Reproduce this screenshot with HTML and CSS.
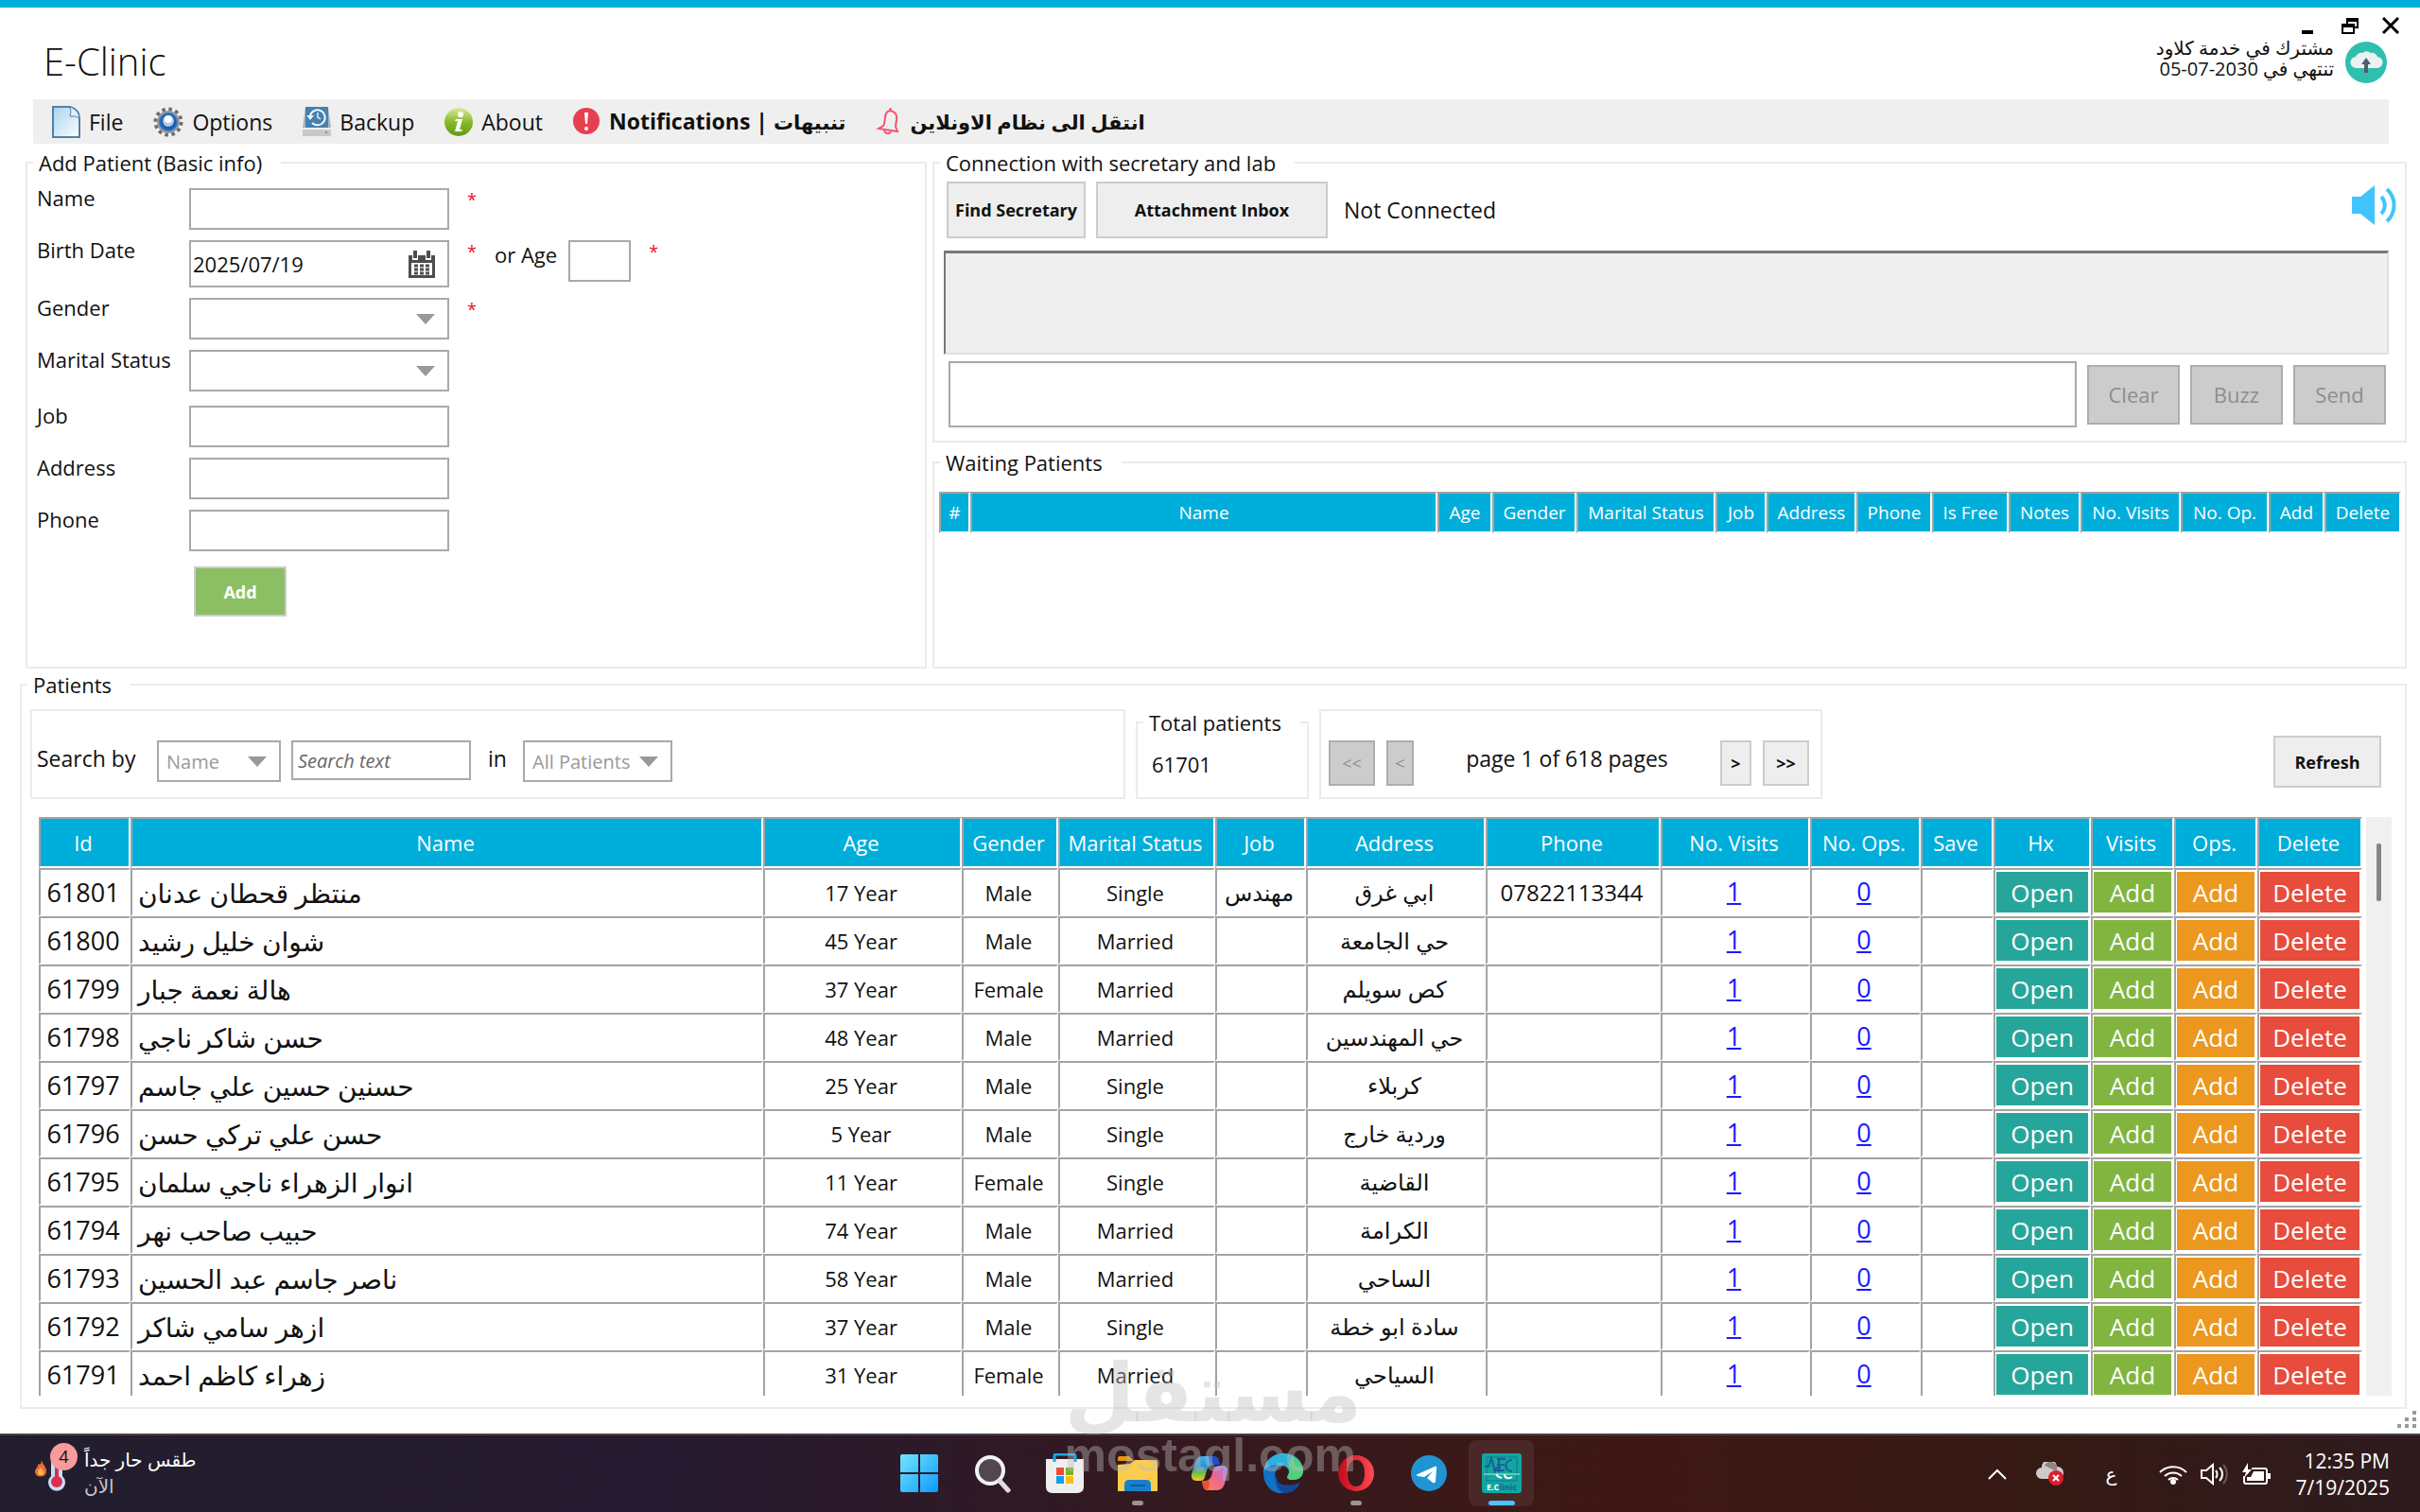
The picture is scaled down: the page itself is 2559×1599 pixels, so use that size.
FILE: index.html
```html
<!DOCTYPE html>
<html lang="en">
<head>
  <meta charset="UTF-8">
  <title>E-Clinic</title>
  <meta name="viewport" content="width=device-width, initial-scale=1">
  <link rel="stylesheet" href="styles.css">
</head>
<body>
  <div class="window">
    <header class="titlebar">
      <h1>E-Clinic</h1>
      <div class="titlebar-right">
        <div class="controls">
          <button type="button" aria-label="Minimize"><svg width="18" height="18" viewBox="0 0 18 18"><path d="M1 14h12v4H1z"/></svg></button>
          <button type="button" aria-label="Restore"><svg width="18" height="18" viewBox="0 0 18 18"><path d="M5 1h13v11h-4v6H0V7h5zm2 4v2h7v3h2V5zM2 11v5h10v-5z" fill-rule="evenodd"/></svg></button>
          <button type="button" aria-label="Close"><svg width="18" height="18" viewBox="0 0 18 18"><path d="M1 1l16 16M17 1L1 17" stroke="#000" stroke-width="3"/></svg></button>
        </div>
        <div class="cloud">
          <p lang="ar" dir="rtl">مشترك في خدمة كلاود<br>تنتهي في <bdi dir="ltr">05-07-2030</bdi></p>
          <svg width="44" height="44" viewBox="0 0 44 44"><circle cx="22" cy="22" r="22" fill="#2fbfae"/><path d="M12 28a6 6 0 0 1-1-12 6 6 0 0 1 7-4 7 7 0 0 1 9 0 6 6 0 0 1 7 4 6 6 0 0 1-1 12z" fill="#ecf0f1"/><path d="M22 17l5 7h-3v9h-4v-9h-3z" fill="#4f5d73"/></svg>
        </div>
      </div>
    </header>

    <nav class="menu">
      <a href="#"><svg width="30" height="34" viewBox="0 0 30 34"><defs><linearGradient id="paper" x1="0" y1="0" x2="1" y2="1"><stop offset="0" stop-color="#a9d2ec"/><stop offset="1" stop-color="#fdfeff"/></linearGradient></defs><path d="M1 1h18q10 3 10 12v20H1z" fill="url(#paper)" stroke="#4f81ab" stroke-width="2"/><path d="M19 1q2 6 0 10 6-1 10 2Q28 4 19 1z" fill="#e3f0f8" stroke="#4f81ab"/></svg>File</a>
      <a href="#"><svg width="32" height="32" viewBox="0 0 32 32"><circle cx="16" cy="16" r="13" fill="none" stroke="#6d6d6d" stroke-width="5" stroke-dasharray="3.4 3.4"/><circle cx="16" cy="16" r="12" fill="#9c9c9c"/><circle cx="16" cy="16" r="9" fill="#1d5aa6" stroke="#2f75c4" stroke-width="2"/><circle cx="16" cy="15" r="6" fill="#a9cbed"/><circle cx="16" cy="13" r="4" fill="#fff"/></svg>Options</a>
      <a href="#"><svg width="30" height="32" viewBox="0 0 30 32"><path d="M3 0h24l3 22H0z" fill="#a9b4bd"/><path d="M3 0h24v22H3z" fill="#4480b0"/><path d="M0 22h30v9H0z" fill="#c9c9c9"/><path d="M0 22h30v2H0z" fill="#eee"/><circle cx="25" cy="27" r="1" fill="#777"/><path d="M8 9a8 8 0 1 1 2 8" fill="none" stroke="#eef6fc" stroke-width="2"/><path d="M16 6v5l3 2" fill="none" stroke="#bcd8ee" stroke-width="2"/><path d="M4 9l4 5 4-5z" fill="#eef6fc"/></svg>Backup</a>
      <a href="#"><svg width="30" height="30" viewBox="0 0 30 30"><defs><linearGradient id="leaf" x1="0" y1="0" x2="0" y2="1"><stop offset="0" stop-color="#dcea9c"/><stop offset="0.5" stop-color="#8ab92c"/><stop offset="1" stop-color="#5d9c12"/></linearGradient></defs><circle cx="15" cy="15" r="15" fill="url(#leaf)"/><circle cx="17" cy="7" r="3" fill="#fff"/><path d="M12 12h7l-3 11h3l-1 2h-7l3-11h-3z" fill="#fff"/></svg>About</a>
      <a href="#" class="bold"><svg width="29" height="29" viewBox="0 0 29 29"><circle cx="14" cy="14" r="14" fill="#e5404f"/><path d="M12 5h4l-1 12h-2z" fill="#fff"/><circle cx="14" cy="22" r="2" fill="#fff"/></svg><span>Notifications | <bdi lang="ar">تنبيهات</bdi></span></a>
      <a href="#" class="bold"><svg width="27" height="29" viewBox="0 0 27 29"><path d="M15 3c6 1 8 5 7 10l-1 7 2 5-20-3 5-3c3-4 0-15 7-16zM9 24c1 4 6 4 7 1M16 0l-1 3" fill="none" stroke="#f0566b" stroke-width="2"/></svg><span lang="ar" dir="rtl">انتقل الى نظام الاونلاين</span></a>
    </nav>

    <div class="top">
      <fieldset class="panel add-patient">
        <legend>Add Patient (Basic info)</legend>
        <form class="patient-form">
          <div class="row">
            <label for="name">Name</label>
            <input type="text" id="name" required>
            <span class="star">*</span>
          </div>
          <div class="row">
            <label for="birth">Birth Date</label>
            <div class="date">
              <input type="text" id="birth" value="2025/07/19">
              <svg width="28" height="30" viewBox="0 0 28 30"><path d="M0 6h4v5h6V6h8v5h6V6h4v24H0z" fill="#4d4d4d"/><path d="M7 1v8M21 1v8" stroke="#4d4d4d" stroke-width="4"/><path d="M3 14h22v13H3z" fill="#fff"/><path d="M6 17h16M6 21h16M6 25h16" stroke="#4d4d4d" stroke-width="3" stroke-dasharray="4 2"/></svg>
            </div>
            <span class="star">*</span>
            <label for="age" class="age-label">or Age</label>
            <input type="text" id="age" class="age">
            <span class="star">*</span>
          </div>
          <div class="row">
            <label for="gender">Gender</label>
            <div class="select"><select id="gender"><option></option><option>Male</option><option>Female</option></select></div>
            <span class="star">*</span>
          </div>
          <div class="row">
            <label for="marital">Marital Status</label>
            <div class="select"><select id="marital"><option></option><option>Single</option><option>Married</option></select></div>
          </div>
          <div class="row row-apart">
            <label for="job">Job</label>
            <input type="text" id="job">
          </div>
          <div class="row">
            <label for="address">Address</label>
            <input type="text" id="address">
          </div>
          <div class="row">
            <label for="phone">Phone</label>
            <input type="text" id="phone">
          </div>
          <button type="submit" class="btn btn-submit">Add</button>
        </form>
      </fieldset>

      <div class="side">
        <fieldset class="panel connection">
          <legend>Connection with secretary and lab</legend>
          <div class="connection-bar">
            <button type="button" class="btn find">Find Secretary</button>
            <button type="button" class="btn inbox">Attachment Inbox</button>
            <span class="status">Not Connected</span>
            <button type="button" class="sound" aria-label="Sound"><svg width="50" height="44" viewBox="0 0 50 44"><path d="M0 13h9L24 1v42L9 31H0z" fill="#40c4ff"/><path d="M31 13c5 5 5 13 0 18M37 5c10 9 10 25 0 34" fill="none" stroke="#40c4ff" stroke-width="4"/></svg></button>
          </div>
          <div class="chat-log"></div>
          <div class="chat-bar">
            <input type="text" aria-label="Message">
            <button type="button" class="btn" disabled>Clear</button>
            <button type="button" class="btn" disabled>Buzz</button>
            <button type="button" class="btn" disabled>Send</button>
          </div>
        </fieldset>

        <fieldset class="panel waiting">
          <legend>Waiting Patients</legend>
          <table class="grid grid-small">
            <colgroup><col style="width: 33px"><col><col style="width: 58px"><col style="width: 89px"><col style="width: 147px"><col style="width: 54px"><col style="width: 95px"><col style="width: 80px"><col style="width: 81px"><col style="width: 76px"><col style="width: 106px"><col style="width: 93px"><col style="width: 59px"><col style="width: 81px"></colgroup>
            <thead>
              <tr><th>#</th><th>Name</th><th>Age</th><th>Gender</th><th>Marital Status</th><th>Job</th><th>Address</th><th>Phone</th><th>Is Free</th><th>Notes</th><th>No. Visits</th><th>No. Op.</th><th>Add</th><th>Delete</th></tr>
            </thead>
          </table>
        </fieldset>
      </div>
    </div>

    <fieldset class="panel patients">
      <legend>Patients</legend>
      <div class="toolbar">
        <form class="box search">
          <label for="by">Search by</label>
          <div class="select by"><select id="by"><option>Name</option></select></div>
          <input type="text" placeholder="Search text" aria-label="Search text">
          <label for="scope" class="in">in</label>
          <div class="select scope"><select id="scope"><option>All Patients</option></select></div>
        </form>
        <fieldset class="panel total">
          <legend>Total patients</legend>
          <span>61701</span>
        </fieldset>
        <div class="box pager">
          <button type="button" class="btn first" disabled>&lt;&lt;</button>
          <button type="button" class="btn prev" disabled>&lt;</button>
          <span>page 1 of 618 pages</span>
          <button type="button" class="btn next">&gt;</button>
          <button type="button" class="btn last">&gt;&gt;</button>
        </div>
        <button type="button" class="btn refresh">Refresh</button>
      </div>

      <div class="list">
        <table class="grid grid-large">
          <colgroup><col style="width: 97px"><col><col style="width: 210px"><col style="width: 102px"><col style="width: 166px"><col style="width: 96px"><col style="width: 190px"><col style="width: 185px"><col style="width: 158px"><col style="width: 117px"><col style="width: 77px"><col style="width: 103px"><col style="width: 88px"><col style="width: 88px"><col style="width: 111px"></colgroup>
          <thead>
            <tr><th>Id</th><th>Name</th><th>Age</th><th>Gender</th><th>Marital Status</th><th>Job</th><th>Address</th><th>Phone</th><th>No. Visits</th><th>No. Ops.</th><th>Save</th><th>Hx</th><th>Visits</th><th>Ops.</th><th>Delete</th></tr>
          </thead>
          <tbody>
            <tr><td class="id">61801</td><td class="name">منتظر قحطان عدنان</td><td>17 Year</td><td>Male</td><td>Single</td><td class="ar">مهندس</td><td class="ar">ابي غرق</td><td class="phone">07822113344</td><td><a href="#">1</a></td><td><a href="#">0</a></td><td></td><td><button class="open">Open</button></td><td><button class="visit">Add</button></td><td><button class="op">Add</button></td><td><button class="delete">Delete</button></td></tr>
            <tr><td class="id">61800</td><td class="name">شوان خليل رشيد</td><td>45 Year</td><td>Male</td><td>Married</td><td></td><td class="ar">حي الجامعة</td><td></td><td><a href="#">1</a></td><td><a href="#">0</a></td><td></td><td><button class="open">Open</button></td><td><button class="visit">Add</button></td><td><button class="op">Add</button></td><td><button class="delete">Delete</button></td></tr>
            <tr><td class="id">61799</td><td class="name">هالة نعمة جبار</td><td>37 Year</td><td>Female</td><td>Married</td><td></td><td class="ar">كص سويلم</td><td></td><td><a href="#">1</a></td><td><a href="#">0</a></td><td></td><td><button class="open">Open</button></td><td><button class="visit">Add</button></td><td><button class="op">Add</button></td><td><button class="delete">Delete</button></td></tr>
            <tr><td class="id">61798</td><td class="name">حسن شاكر ناجي</td><td>48 Year</td><td>Male</td><td>Married</td><td></td><td class="ar">حي المهندسين</td><td></td><td><a href="#">1</a></td><td><a href="#">0</a></td><td></td><td><button class="open">Open</button></td><td><button class="visit">Add</button></td><td><button class="op">Add</button></td><td><button class="delete">Delete</button></td></tr>
            <tr><td class="id">61797</td><td class="name">حسنين حسين علي جاسم</td><td>25 Year</td><td>Male</td><td>Single</td><td></td><td class="ar">كربلاء</td><td></td><td><a href="#">1</a></td><td><a href="#">0</a></td><td></td><td><button class="open">Open</button></td><td><button class="visit">Add</button></td><td><button class="op">Add</button></td><td><button class="delete">Delete</button></td></tr>
            <tr><td class="id">61796</td><td class="name">حسن علي تركي حسن</td><td>5 Year</td><td>Male</td><td>Single</td><td></td><td class="ar">وردية خارج</td><td></td><td><a href="#">1</a></td><td><a href="#">0</a></td><td></td><td><button class="open">Open</button></td><td><button class="visit">Add</button></td><td><button class="op">Add</button></td><td><button class="delete">Delete</button></td></tr>
            <tr><td class="id">61795</td><td class="name">انوار الزهراء ناجي سلمان</td><td>11 Year</td><td>Female</td><td>Single</td><td></td><td class="ar">القاضية</td><td></td><td><a href="#">1</a></td><td><a href="#">0</a></td><td></td><td><button class="open">Open</button></td><td><button class="visit">Add</button></td><td><button class="op">Add</button></td><td><button class="delete">Delete</button></td></tr>
            <tr><td class="id">61794</td><td class="name">حبيب صاحب نهر</td><td>74 Year</td><td>Male</td><td>Married</td><td></td><td class="ar">الكرامة</td><td></td><td><a href="#">1</a></td><td><a href="#">0</a></td><td></td><td><button class="open">Open</button></td><td><button class="visit">Add</button></td><td><button class="op">Add</button></td><td><button class="delete">Delete</button></td></tr>
            <tr><td class="id">61793</td><td class="name">ناصر جاسم عبد الحسين</td><td>58 Year</td><td>Male</td><td>Married</td><td></td><td class="ar">الساحي</td><td></td><td><a href="#">1</a></td><td><a href="#">0</a></td><td></td><td><button class="open">Open</button></td><td><button class="visit">Add</button></td><td><button class="op">Add</button></td><td><button class="delete">Delete</button></td></tr>
            <tr><td class="id">61792</td><td class="name">ازهر سامي شاكر</td><td>37 Year</td><td>Male</td><td>Single</td><td></td><td class="ar">سادة ابو خطة</td><td></td><td><a href="#">1</a></td><td><a href="#">0</a></td><td></td><td><button class="open">Open</button></td><td><button class="visit">Add</button></td><td><button class="op">Add</button></td><td><button class="delete">Delete</button></td></tr>
            <tr><td class="id">61791</td><td class="name">زهراء كاظم احمد</td><td>31 Year</td><td>Female</td><td>Married</td><td></td><td class="ar">السياحي</td><td></td><td><a href="#">1</a></td><td><a href="#">0</a></td><td></td><td><button class="open">Open</button></td><td><button class="visit">Add</button></td><td><button class="op">Add</button></td><td><button class="delete">Delete</button></td></tr>
          </tbody>
        </table>
        <div class="scrollbar"><div class="thumb"></div></div>
      </div>
    </fieldset>
    <svg class="grip" width="20" height="18" viewBox="0 0 20 18"><path d="M16 0h4v4h-4zM16 7h4v4h-4zM16 14h4v4h-4zM8 7h4v4H8zM8 14h4v4H8zM0 14h4v4H0z" fill="#999"/></svg>
  </div>

  <footer class="taskbar">
    <div class="weather">
      <svg width="46" height="52" viewBox="0 0 46 52"><path d="M7 18c1 5 6 8 5 13-1 6-11 6-12 0 0-5 4-5 3-9 3 2 4-1 4-4z" fill="#ee6a35"/><path d="M6 26c4 4 4 8 0 8s-4-4 0-8z" fill="#fbc04d"/><path d="M17 20a6 6 0 0 1 12 0v15a9 9 0 1 1-12 0z" fill="#c5dff5"/><circle cx="23" cy="41" r="6" fill="#d9304f"/><path d="M21 22h4v18h-4z" fill="#d9304f"/></svg>
      <span class="badge">4</span>
      <p lang="ar">طقس حار جداً<br><span>الآن</span></p>
    </div>
    <div class="apps">
      <button type="button" aria-label="Start"><svg width="42" height="42" viewBox="0 0 42 42"><defs><linearGradient id="win" x1="0" y1="0" x2="1" y2="1"><stop offset="0" stop-color="#74e6fc"/><stop offset="1" stop-color="#0a9aff"/></linearGradient></defs><path d="M1 3q0-2 2-2h17v19H1zM22 1h17q2 0 2 2v17H22zM1 22h19v19H3q-2 0-2-2zM22 22h19v17q0 2-2 2H22z" fill="url(#win)"/></svg></button>
      <button type="button" aria-label="Search"><svg width="42" height="42" viewBox="0 0 42 42"><circle cx="19" cy="18" r="14" fill="#53474f" stroke="#f2f2f2" stroke-width="4"/><path d="M29 29l9 10" stroke="#dedede" stroke-width="5" stroke-linecap="round"/></svg></button>
      <button type="button" aria-label="Store"><svg width="42" height="42" viewBox="0 0 42 42"><path d="M1 6h40v29q0 7-7 7H8q-7 0-7-7z" fill="#efefef"/><path d="M10 9V3q0-2 2-2h18q2 0 2 2v6" fill="none" stroke="#1ba7ea" stroke-width="3"/><path d="M12 15h8v8h-8z" fill="#ef4a37"/><path d="M22 15h8v8h-8z" fill="#75b51c"/><path d="M12 24h8v8h-8z" fill="#0aa2ee"/><path d="M22 24h8v8h-8z" fill="#fdbb1c"/></svg></button>
      <button type="button" aria-label="Files" class="running"><svg width="42" height="42" viewBox="0 0 42 42"><path d="M0 5q0-2 2-2h10l5 5h-17z" fill="#e8930e"/><path d="M0 12l13-1 5-4h22q2 0 2 2v31H0z" fill="#fccd4c"/><path d="M7 40V33q0-5 5-5h18q5 0 5 5v7z" fill="#1680cc"/><path d="M13 34h16" stroke="#0c5d9e" stroke-width="2"/></svg></button>
      <button type="button" aria-label="Copilot"><svg width="42" height="42" viewBox="0 0 42 42"><defs><linearGradient id="pilot-a" x1="0" y1="0" x2="0" y2="1"><stop offset="0" stop-color="#34b5f0"/><stop offset="0.4" stop-color="#2a8fd8"/><stop offset="0.7" stop-color="#74c043"/><stop offset="1" stop-color="#fcc92a"/></linearGradient><linearGradient id="pilot-b" x1="1" y1="0" x2="0" y2="1"><stop offset="0" stop-color="#a07bf5"/><stop offset="0.5" stop-color="#f0668c"/><stop offset="1" stop-color="#fb8f4a"/></linearGradient></defs><path d="M12 3h12q5 0 6 6l1 3h-7q-5 0-7 6l-2 7q-1 4-5 4H6q-6 0-5-7L5 9q2-6 7-6z" fill="url(#pilot-a)"/><path d="M19 3h5q5 0 6 6l1 3h-8q-3-1-4-9z" fill="#1a4fd0"/><path d="M30 13h4q6 0 5 7l-3 12q-2 7-8 7H18q-4 0-5-5l-1-5h3q5 0 7-5l2-7q2-4 6-4z" fill="url(#pilot-b)"/><path d="M12 29h8l-1 9q-5 1-6-4z" fill="#ee5030"/></svg></button>
      <button type="button" aria-label="Edge"><svg width="44" height="42" viewBox="0 0 44 42"><path d="M1 21C1 9 10 0 22 0s21 8 21 18c0 7-5 10-11 10-5 0-7-2-5-5 3-5-1-10-7-10C11 13 2 16 1 21z" fill="#2bb1dc"/><path d="M31 3c7 3 12 9 12 15 0 7-5 10-11 10-5 0-7-2-5-5 2-3 2-6 0-8z" fill="#4fd07a"/><path d="M1 21c1-7 10-10 18-8-5 3-7 8-5 14 2 7 9 11 18 10-5 4-9 5-13 5C9 42 1 32 1 21z" fill="#1272c4"/><path d="M15 23c-1 9 7 14 25 8-4 8-10 11-17 11-8-3-11-12-8-19z" fill="#12489a"/></svg></button>
      <button type="button" aria-label="Opera" class="running"><svg width="40" height="40" viewBox="0 0 40 40"><defs><linearGradient id="opera" x1="0" y1="0" x2="1" y2="0"><stop offset="0" stop-color="#c00d1c"/><stop offset="1" stop-color="#ff4a52"/></linearGradient></defs><path d="M20 1a19 19 0 1 0 0 38 19 19 0 1 0 0-38zm0 5c6 0 9 6 9 14s-3 14-9 14-9-6-9-14 3-14 9-14z" fill="url(#opera)" fill-rule="evenodd"/></svg></button>
      <button type="button" aria-label="Telegram"><svg width="40" height="40" viewBox="0 0 40 40"><circle cx="20" cy="20" r="19" fill="#2094d2"/><path d="M8 21l18-8q3-1 2 2l-1 14q-1 2-3 1l-6-5 6-7-9 6-7-1q-2-1 0-2z" fill="#fff"/></svg></button>
      <button type="button" aria-label="E-Clinic" class="active"><svg width="42" height="42" viewBox="0 0 42 42"><rect width="42" height="42" rx="3" fill="#0fa89d"/><path d="M5 4h32v25H5z" fill="none" stroke="#1b6f9c" stroke-width="1"/><path d="M3 14h4l3-9 4 14 2-4h4M16 6h9M16 12h8M18 6v14M12 18h12M32 7c-9 0-9 12 0 12" fill="none" stroke="#1f5b9a" stroke-width="2"/><path d="M2 22h38" stroke="#b9e5e2" stroke-width="1"/><path d="M15 22c2 4 5 3 6 4M24 22c0 5 5 5 8 3" fill="none" stroke="#fff" stroke-width="2"/><text x="21" y="39" text-anchor="middle" class="app-name">E.C<tspan class="app-name-end">linic</tspan></text></svg></button>
    </div>
    <div class="tray">
      <svg width="22" height="14" viewBox="0 0 22 14"><path d="M2 12l9-9 9 9" fill="none" stroke="#fff" stroke-width="2"/></svg>
      <svg class="sync" width="30" height="26" viewBox="0 0 30 26"><path d="M6 18a6 6 0 0 1 0-12 8 8 0 0 1 16-1 6 6 0 0 1 1 13z" fill="#cfcaca"/><path d="M9 4a7 7 0 0 1 13 1v5z" fill="#8e8684"/><circle cx="21" cy="17" r="8" fill="#dc1f2c"/><path d="M18 14l6 6M24 14l-6 6" stroke="#fff" stroke-width="2"/></svg>
      <span lang="ar" class="lang">ع</span>
      <svg width="30" height="22" viewBox="0 0 30 22"><path d="M1 9a20 20 0 0 1 28 0M6 13a13 13 0 0 1 18 0M10 17a7 7 0 0 1 10 0" fill="none" stroke="#fff" stroke-width="2"/><circle cx="15" cy="19" r="3" fill="#fff"/></svg>
      <svg width="30" height="24" viewBox="0 0 30 24"><path d="M1 8h5l7-6v20l-7-6H1zM16 8c2 2 2 6 0 8M20 5c4 4 4 10 0 14" fill="none" stroke="#fff" stroke-width="2"/><path d="M24 2c5 6 5 14 0 20" fill="none" stroke="#6b5a59" stroke-width="2"/></svg>
      <svg width="30" height="24" viewBox="0 0 30 24"><path d="M10 6h14q2 0 2 2v12q0 2-2 2H4q-2 0-2-2v-6" fill="none" stroke="#fff" stroke-width="2"/><path d="M12 9h11v10H5v-4h4zM27 11h3v6h-3zM6 0L0 10h4l-2 6 8-9H6z" fill="#fff"/></svg>
      <p>12:35 PM<br>7/19/2025</p>
    </div>
  </footer>

  <div class="watermark">
    <span class="watermark-ar" lang="ar">مستقل</span>
    <span class="watermark-en">mostaql.com</span>
  </div>
</body>
</html>
```
FILE: styles.css
```css
* {
  box-sizing: border-box;
}
body,
button,
input,
select {
  font-family: "Open Sans", "DejaVu Sans", sans-serif;
  font-size: 22px;
  color: #111;
}
body {
  margin: 0;
  height: 100vh;
  display: flex;
  flex-direction: column;
  line-height: 24px;
  background: #fff;
  overflow: hidden;
}
h1,
p {
  margin: 0;
}
button {
  padding: 0;
}
svg {
  flex: none;
  display: block;
}
.window {
  flex: 1;
  min-height: 0;
  display: flex;
  flex-direction: column;
  position: relative;
  border-top: 8px solid #00aedb;
  padding-bottom: 26px;
}

/* title bar */
.titlebar {
  display: flex;
  justify-content: space-between;
  height: 97px;
  padding: 10px 22px 0 46px;
}
.titlebar h1 {
  font-size: 40px;
  font-weight: 300;
  line-height: 94px;
}
.titlebar-right {
  display: flex;
  flex-direction: column;
  align-items: flex-end;
  gap: 8px;
}
.controls {
  display: flex;
  gap: 25px;
}
.controls button,
.sound {
  border: 0;
  background: none;
}
.cloud {
  display: flex;
  gap: 12px;
  padding-right: 13px;
  font-size: 20px;
  line-height: 22px;
}
.cloud p {
  margin-top: -4px;
}

/* menu */
.menu {
  display: flex;
  align-items: center;
  gap: 32px;
  height: 47px;
  margin: 0 33px 0 35px;
  padding: 0 20px;
  background: #efefef;
}
.menu a {
  display: flex;
  align-items: center;
  gap: 9px;
  font-size: 23px;
  color: #111;
  text-decoration: none;
}
.menu .bold {
  font-weight: bold;
}
.menu [lang="ar"] {
  font-size: 21px;
}

/* panels */
.panel {
  min-width: 0;
  margin: 0;
  padding: 0;
  border: 2px solid #ebebeb;
}
.panel legend {
  margin-left: 6px;
  padding: 0 20px 0 6px;
  line-height: 24px;
}
.top {
  display: grid;
  grid-template-columns: 953fr 1559fr;
  gap: 6px;
  margin: 8px 14px 5px 27px;
}
.side {
  display: flex;
  flex-direction: column;
  gap: 9px;
}

/* fields */
input,
select {
  height: 44px;
  border: 2px solid #a9a9a9;
  border-radius: 0;
  background: #fff;
  padding: 0 8px;
  outline: none;
}
.select {
  position: relative;
}
.select select {
  width: 100%;
  appearance: none;
}
.select::after {
  content: "";
  position: absolute;
  top: 17px;
  right: 15px;
  border: 10px solid transparent;
  border-top: 11px solid #999;
  border-bottom: 0;
  pointer-events: none;
}
.btn {
  border: 2px solid #ccc;
  background: #eee;
  font-size: 18px;
  font-weight: bold;
}
.btn:disabled {
  border-color: #adadad;
  background: #ccc;
  color: #8d8d8d;
  font-weight: normal;
}

/* add patient */
.patient-form {
  display: flex;
  flex-direction: column;
  gap: 11px;
  padding: 15px 0 53px 10px;
}
.row {
  display: flex;
  align-items: flex-start;
}
.row > label {
  line-height: 20px;
}
.row > label:first-child {
  width: 161px;
}
.row > input,
.row > .select {
  width: 275px;
}
.row-apart {
  margin-top: 4px;
}
.date {
  display: flex;
  align-items: center;
  width: 275px;
  height: 50px;
  padding-right: 13px;
  border: 2px solid #a9a9a9;
}
.date input {
  flex: 1;
  min-width: 0;
  height: 40px;
  padding: 0 2px;
  border: 0;
}
.star {
  width: 10px;
  margin-left: 19px;
  font-size: 18px;
  color: #e81123;
}
.age-label {
  margin: 5px 12px 0 19px;
}
.row > .age {
  width: 66px;
}
.btn-submit {
  width: 98px;
  height: 53px;
  margin: 5px 0 0 166px;
  background: #8cbf64;
  color: #fff;
}

/* connection */
.connection-bar {
  display: flex;
  align-items: center;
  gap: 11px;
  height: 60px;
  margin-top: 8px;
  padding: 0 6px 0 13px;
}
.connection-bar .btn {
  height: 60px;
}
.find {
  width: 147px;
}
.inbox {
  width: 245px;
}
.status {
  margin-left: 6px;
  font-size: 23px;
}
.sound {
  margin: 0 0 10px auto;
}
.chat-log {
  height: 110px;
  margin: 13px 17px 7px 10px;
  border: 2px solid #e0e0e0;
  border-top: 3px solid #777;
  border-left-color: #777;
  background: #efefef;
}
.chat-bar {
  display: flex;
  align-items: center;
  gap: 11px;
  padding: 0 20px 14px 15px;
}
.chat-bar input {
  flex: 1;
  height: 70px;
}
.chat-bar .btn {
  width: 98px;
  height: 63px;
  font-size: 22px;
}

/* tables */
.waiting {
  flex: 1;
}
.grid {
  width: 100%;
  table-layout: fixed;
  border-spacing: 0;
}
.grid th,
.grid td {
  padding: 0;
  border: 2px solid #fff;
  border-top-color: #a3a3a3;
  border-left-color: #a3a3a3;
  text-align: center;
  white-space: nowrap;
}
.grid th {
  padding-right: 3px;
  background: #00aedb;
  background-clip: padding-box;
  color: #fff;
  font-weight: normal;
}
.grid td {
  padding-right: 3px;
}
.grid-small {
  margin: 19px 4px 0 5px;
  width: calc(100% - 9px);
}
.grid-small th {
  height: 44px;
  padding: 0;
  font-size: 19px;
}
.grid-large th {
  height: 54px;
}
.grid-large td {
  height: 51px;
}
.grid td.id {
  font-size: 27px;
}
.grid td.name {
  padding-left: 6px;
  font-size: 28px;
  text-align: left;
}
.grid td.ar {
  font-size: 24px;
}
.grid td.phone {
  font-size: 24px;
}
.grid a {
  font-size: 27px;
  color: #1a1aff;
}
.grid button {
  display: block;
  width: calc(100% + 3px);
  height: 45px;
  border: 1px solid #fff;
  font-size: 26px;
  color: #fff;
}
.open {
  background: #26a69a;
}
.visit {
  background: #82b53f;
}
.op {
  background: #ec971f;
}
.delete {
  background: #e74c3c;
}

/* patients */
.patients {
  flex: 1;
  min-height: 0;
  display: flex;
  flex-direction: column;
  margin: 0 14px 0 21px;
}
.toolbar {
  display: flex;
  align-items: flex-start;
  gap: 11px;
  padding: 14px 25px 0 9px;
}
.box {
  display: flex;
  height: 95px;
  border: 2px solid #ebebeb;
}
.search {
  width: 1158px;
  align-items: flex-start;
  padding: 31px 0 0 5px;
}
.search label {
  width: 127px;
  font-size: 23px;
  line-height: 38px;
}
.search .in {
  width: 55px;
  padding-left: 18px;
}
.search select,
.search input {
  font-size: 20px;
  color: #999;
}
.search input {
  width: 190px;
  height: 42px;
  margin-left: 11px;
  padding: 0 5px;
}
.search input::placeholder {
  color: #666;
  font-style: italic;
}
.by {
  width: 131px;
}
.scope {
  width: 158px;
}
.total {
  width: 183px;
  height: 93px;
  margin-top: 2px;
}
.total span {
  display: block;
  padding: 20px 15px 0;
}
.pager {
  width: 532px;
  padding: 31px 12px 0 8px;
  gap: 12px;
}
.pager .btn {
  height: 48px;
}
.first,
.last {
  width: 49px;
}
.prev {
  width: 29px;
}
.next {
  width: 33px;
}
.pager span {
  flex: 1;
  font-size: 23px;
  text-align: center;
  line-height: 38px;
}
.refresh {
  width: 114px;
  height: 55px;
  margin: 28px 0 0 auto;
}
.list {
  flex: 1;
  min-height: 0;
  display: flex;
  align-items: flex-start;
  gap: 4px;
  margin: 19px 14px 12px 18px;
  overflow: hidden;
}
.scrollbar {
  flex: none;
  align-self: stretch;
  width: 27px;
  padding: 28px 11px;
  background: #f0f0f0;
}
.thumb {
  height: 61px;
  border-radius: 2px;
  background: #858585;
}
.grip {
  position: absolute;
  right: 4px;
  bottom: 6px;
}

/* taskbar */
.taskbar {
  display: grid;
  grid-template-columns: 1fr auto 1fr;
  height: 83px;
  border-top: 2px solid #4b4148;
  background: linear-gradient(90deg, #221e2e, #261a30 28%, #35191f 50%, #3f1814 68%, #351a16 86%, #2e1b1e);
  color: #fff;
  font-size: 20px;
  line-height: 28px;
}
.weather {
  position: relative;
  display: flex;
  gap: 6px;
  padding: 8px 0 0 37px;
}
.weather p {
  padding-top: 4px;
}
.weather p span {
  color: #c8c4c8;
}
.badge {
  position: absolute;
  left: 53px;
  top: 8px;
  width: 29px;
  height: 29px;
  border-radius: 50%;
  background: #f79b9b;
  color: #111;
  font-size: 18px;
  text-align: center;
}
.apps {
  display: flex;
}
.apps button {
  position: relative;
  display: flex;
  align-items: center;
  justify-content: center;
  width: 69px;
  height: 70px;
  margin: 5px 4px;
  border: 0;
  border-radius: 8px;
  background: none;
}
.apps .active {
  background: #4a2828;
}
.apps .running::after,
.apps .active::after {
  content: "";
  position: absolute;
  bottom: 1px;
  width: 12px;
  height: 5px;
  border-radius: 3px;
  background: #9d9391;
}
.apps .active::after {
  width: 28px;
  background: #4cc2ff;
}
.app-name {
  fill: #fff;
  font-size: 9px;
  font-weight: bold;
}
.app-name-end {
  fill: #1f5b9a;
}
.tray {
  display: flex;
  align-items: center;
  justify-content: flex-end;
  gap: 14px;
  padding-right: 32px;
}
.tray p {
  margin-left: 13px;
  font-size: 21px;
  text-align: right;
}
.sync {
  margin-left: 16px;
}
.lang {
  margin: 0 30px;
}

.watermark {
  position: absolute;
  left: 50%;
  bottom: 34px;
  width: 308px;
  margin-left: -154px;
  color: rgba(190, 190, 190, 0.4);
  font-weight: bold;
  text-align: center;
  white-space: nowrap;
  pointer-events: none;
}
.watermark span {
  display: block;
}
.watermark-ar {
  font-size: 86px;
  line-height: 86px;
}
.watermark-en {
  font-family: "Liberation Sans", sans-serif;
  font-size: 50px;
  line-height: 52px;
}
```
